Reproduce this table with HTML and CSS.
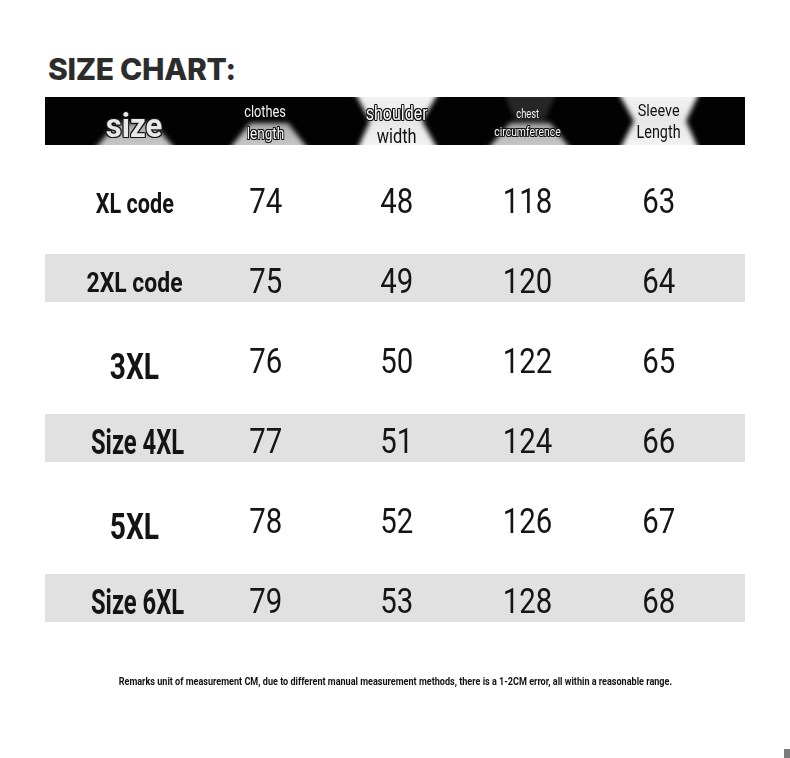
FILE: index.html
```html
<!DOCTYPE html>
<html lang="en">
<head>
<meta charset="utf-8">
<title>Size Chart</title>
<link rel="stylesheet" href="styles.css">
</head>
<body>
<div class="page">
  <h1 class="title">SIZE CHART:</h1>

  <div class="thead">
    <svg class="thead-bg" viewBox="0 0 700 48" preserveAspectRatio="none" aria-hidden="true">
      <defs>
        <filter id="soft" x="-5%" y="-60%" width="110%" height="220%">
          <feGaussianBlur stdDeviation="2.6"/>
        </filter>
        <linearGradient id="gbot" x1="0" y1="0" x2="0" y2="1">
          <stop offset="0" stop-color="#a9a9a9"/>
          <stop offset="1" stop-color="#d6d6d6"/>
        </linearGradient>
        <linearGradient id="wht" x1="0" y1="0" x2="0" y2="1">
          <stop offset="0" stop-color="#f9f9f9"/>
          <stop offset="0.5" stop-color="#e6e6e6"/>
          <stop offset="1" stop-color="#f9f9f9"/>
        </linearGradient>
      </defs>
      <rect x="0" y="0" width="700" height="48" fill="#020202"/>
      <g filter="url(#soft)">
        <polygon points="43,60 72,26 108,26 137,60" fill="url(#gbot)"/>
        <polygon points="178,60 205,26 243,26 269,60" fill="url(#gbot)"/>
        <polygon points="436,60 465,26 505,26 532,60" fill="url(#gbot)"/>
        <polygon points="455,-12 515,-12 500,22 470,22" fill="#262626"/>
        <polygon points="306,-12 398,-12 377,24 397,60 309,60 325,24" fill="url(#wht)"/>
        <polygon points="569,-12 658,-12 641,24 657,60 571,60 589,24" fill="url(#wht)"/>
      </g>
    </svg>
    <div class="hcell">
      <span class="size-word">size</span>
    </div>
    <div class="hcell">
      <span class="cond h-clothes">clothes</span>
      <span class="cond h-length outline">length</span>
    </div>
    <div class="hcell">
      <span class="cond h-shoulder outline">shoulder</span>
      <span class="cond h-width">width</span>
    </div>
    <div class="hcell">
      <span class="cond h-chest">chest</span>
      <span class="cond h-circ outline">circumference</span>
    </div>
    <div class="hcell">
      <span class="cond h-sleeve">Sleeve</span>
      <span class="cond h-slength">Length</span>
    </div>
  </div>

  <div class="tbody">
    <div class="row">
      <div class="cell"><span class="label l-xl">XL code</span></div>
      <div class="cell"><span class="num">74</span></div><div class="cell"><span class="num">48</span></div><div class="cell"><span class="num">118</span></div><div class="cell"><span class="num">63</span></div>
    </div>
    <div class="row band">
      <div class="cell"><span class="label l-2xl">2XL code</span></div>
      <div class="cell"><span class="num">75</span></div><div class="cell"><span class="num">49</span></div><div class="cell"><span class="num">120</span></div><div class="cell"><span class="num">64</span></div>
    </div>
    <div class="row">
      <div class="cell"><span class="label l-big">3XL</span></div>
      <div class="cell"><span class="num">76</span></div><div class="cell"><span class="num">50</span></div><div class="cell"><span class="num">122</span></div><div class="cell"><span class="num">65</span></div>
    </div>
    <div class="row band">
      <div class="cell"><span class="label l-mid">Size 4XL</span></div>
      <div class="cell"><span class="num">77</span></div><div class="cell"><span class="num">51</span></div><div class="cell"><span class="num">124</span></div><div class="cell"><span class="num">66</span></div>
    </div>
    <div class="row">
      <div class="cell"><span class="label l-big">5XL</span></div>
      <div class="cell"><span class="num">78</span></div><div class="cell"><span class="num">52</span></div><div class="cell"><span class="num">126</span></div><div class="cell"><span class="num">67</span></div>
    </div>
    <div class="row band">
      <div class="cell"><span class="label l-mid">Size 6XL</span></div>
      <div class="cell"><span class="num">79</span></div><div class="cell"><span class="num">53</span></div><div class="cell"><span class="num">128</span></div><div class="cell"><span class="num">68</span></div>
    </div>
  </div>

  <p class="remark"><span class="remark-text">Remarks unit of measurement CM, due to different manual measurement methods, there is a 1-2CM error, all within a reasonable range.</span></p>
</div>
</body>
</html>
```
FILE: styles.css
```css
html {
  min-height: 100%;
  background: #ffffff linear-gradient(#7b7b7b, #7b7b7b) no-repeat;
  background-size: 6px 9px;
  background-position: right bottom;
}

body {
  margin: 0;
  font-family: Roboto, "Liberation Sans", sans-serif;
  color: #111;
}

.page {
  width: 700px;
  padding: 54px 0 0 45px;
}

.title {
  margin: 0 0 13px 3px;
  font-family: Inter, "Liberation Sans", sans-serif;
  font-weight: 800;
  font-size: 30px;
  line-height: 30px;
  color: #2c2c2c;
  letter-spacing: -0.3px;
}

/* ---------- header bar ---------- */
.thead {
  position: relative;
  height: 48px;
  display: grid;
  grid-template-columns: repeat(5, 131px);
  padding: 0 21px 0 24px;
}

.thead-bg {
  position: absolute;
  left: 0;
  top: 0;
  width: 100%;
  height: 100%;
}

.hcell {
  position: relative;
  display: flex;
  flex-direction: column;
  align-items: center;
  justify-content: flex-start;
  line-height: 1;
}

.cond {
  display: inline-block;
  white-space: nowrap;
  transform: scaleX(0.8);
}

.outline {
  color: #fafafa;
  text-shadow: 1px 0 0 #111, -1px 0 0 #111, 0 1px 0 #111, 0 -1px 0 #111,
    1px 1px 0 #111, -1px -1px 0 #111, 1px -1px 0 #111, -1px 1px 0 #111;
}

.size-word {
  display: inline-block;
  margin-top: 12px;
  font-size: 33px;
  font-weight: bold;
  line-height: 33px;
  color: #e8e8e8;
  transform: scaleX(0.94);
  text-shadow: 1px 0 0 #161616, -1px 0 0 #161616, 0 1px 0 #161616, 0 -1px 0 #161616,
    1px 1px 0 #161616, -1px -1px 0 #161616, 1px -1px 0 #161616, -1px 1px 0 #161616;
}

.h-clothes {
  margin-top: 7px;
  font-size: 16px;
  line-height: 16px;
  color: #f4f4f4;
}

.h-length {
  margin-top: 5px;
  font-size: 17px;
  line-height: 17px;
}

.h-shoulder {
  margin-top: 6px;
  font-size: 20px;
  line-height: 20px;
}

.h-width {
  margin-top: 3px;
  font-size: 21px;
  line-height: 21px;
  color: #111;
  transform: scaleX(0.78);
}

.h-chest {
  margin-top: 11px;
  font-size: 12px;
  line-height: 12px;
  color: #f2f2f2;
  transform: scaleX(0.78);
}

.h-circ {
  margin-top: 5px;
  font-size: 13px;
  line-height: 13px;
}

.h-sleeve {
  margin-top: 5px;
  font-size: 17px;
  line-height: 17px;
  color: #111;
  transform: scaleX(0.85);
}

.h-slength {
  margin-top: 4px;
  font-size: 18px;
  line-height: 18px;
  color: #111;
}

/* ---------- body rows ---------- */
.tbody {
  margin-top: 16px;
}

.row {
  height: 80px;
  display: grid;
  grid-template-columns: repeat(5, 131px);
  padding: 0 21px 0 24px;
  align-items: center;
}

.band {
  background: linear-gradient(to bottom, transparent 13px, #e1e1e1 13px, #e1e1e1 61px, transparent 61px);
}

.cell {
  text-align: center;
}

.num {
  display: inline-block;
  font-size: 35px;
  line-height: 35px;
  color: #151515;
  transform: scaleX(0.84);
}

.label {
  display: inline-block;
  white-space: nowrap;
  font-weight: bold;
  color: #141414;
}

.l-xl {
  padding-top: 6px;
  font-size: 27px;
  line-height: 27px;
  transform: scaleX(0.8);
}

.l-2xl {
  padding-top: 4px;
  font-size: 27px;
  line-height: 27px;
  transform: scaleX(0.85);
}

.l-big {
  padding-top: 10px;
  font-size: 37px;
  line-height: 37px;
  transform: scaleX(0.76);
}

.l-mid {
  padding-top: 2px;
  font-size: 35px;
  line-height: 35px;
  transform: scaleX(0.68);
}

.remark {
  margin: 34px 0 0;
  text-align: center;
  font-size: 11px;
  line-height: 14px;
  white-space: nowrap;
}

.remark-text {
  display: inline-block;
  font-weight: bold;
  color: #111;
  transform: scaleX(0.825);
}
```
